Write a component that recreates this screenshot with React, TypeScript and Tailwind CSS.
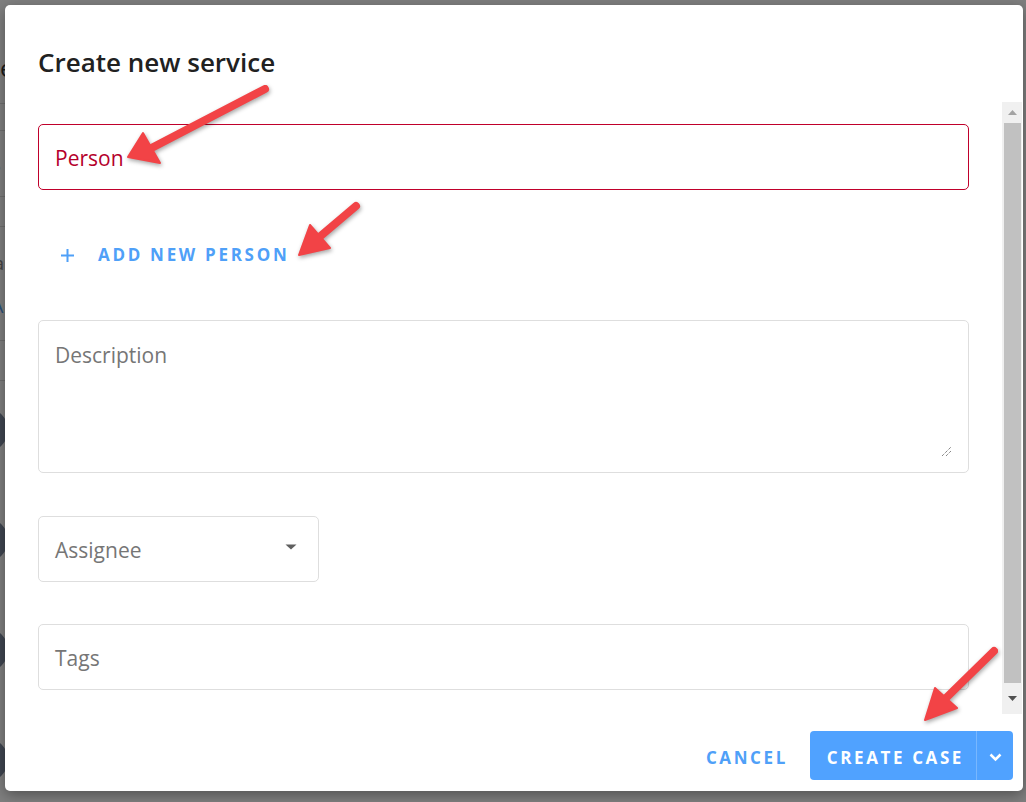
import React from "react";

function Arrow({ tail, tip, c1, c2 }: { tail: [number, number]; tip: [number, number]; c1: [number, number]; c2: [number, number] }) {
  const mx = (c1[0] + c2[0]) / 2;
  const my = (c1[1] + c2[1]) / 2;
  return (
    <g>
      <line x1={tail[0]} y1={tail[1]} x2={mx} y2={my} stroke="#f24346" strokeWidth={8} strokeLinecap="round" />
      <polygon points={`${tip[0]},${tip[1]} ${c1[0]},${c1[1]} ${c2[0]},${c2[1]}`} fill="#f24346" strokeLinejoin="round" stroke="#f24346" strokeWidth={2} />
    </g>
  );
}

export default function App() {
  const font = { fontFamily: '"Open Sans", "Noto Sans", sans-serif' };
  return (
    <div className="relative w-[1026px] h-[802px] overflow-hidden bg-[#7f7f7f]" style={font}>
      {/* dimmed background page fragments */}
      <div className="absolute left-[-40px] top-[50px] text-[24px] text-[#1a1a1a]">Cases</div>
      <div className="absolute left-0 top-[103px] w-[10px] h-px bg-[#6e6e6e]" />
      <div className="absolute left-0 top-[130px] w-[10px] h-px bg-[#6e6e6e]" />
      <div className="absolute left-0 top-[196px] w-[10px] h-px bg-[#6e6e6e]" />
      <div className="absolute left-0 top-[226px] w-[10px] h-px bg-[#6e6e6e]" />
      <div className="absolute left-0 top-[340px] w-[10px] h-px bg-[#6e6e6e]" />
      <div className="absolute left-0 top-[380px] w-[10px] h-px bg-[#6e6e6e]" />
      <div className="absolute left-[-10px] top-[150px] text-[20px] text-[#555]">S</div>
      <div className="absolute left-[-6px] top-[250px] text-[18px] text-[#444]">a</div>
      <div className="absolute left-[-8px] top-[293px] text-[18px] text-[#2a4f7a]">A</div>
      <div className="absolute left-[-36px] top-[408px] w-[44px] h-[44px] rounded-full bg-[#3f4550]" />
      <div className="absolute left-[-36px] top-[518px] w-[44px] h-[44px] rounded-full bg-[#3f4550]" />
      <div className="absolute left-[-36px] top-[628px] w-[44px] h-[44px] rounded-full bg-[#3f4550]" />
      <div className="absolute left-[-36px] top-[738px] w-[44px] h-[44px] rounded-full bg-[#3f4550]" />

      {/* modal */}
      <div className="absolute left-[5px] top-[5px] w-[1018px] h-[786px] bg-white rounded-[5px] shadow-[0_4px_14px_rgba(0,0,0,0.35)] flex flex-col">
        <div className="h-[97px] shrink-0 pl-[33px] pt-[40px]">
          <h2 className="text-[26px] leading-[34px] font-semibold text-[#212121]">Create new service</h2>
        </div>
        <div className="flex flex-1 min-h-0">
          <div className="flex-1 pl-[33px] pr-[33px] pt-[22px] flex flex-col">
            <div className="h-[66px] border border-[#c0002b] rounded-[5px] flex items-center pl-[16px] pt-[3px]">
              <span className="text-[21px] text-[#b5002b]">Person</span>
            </div>
            <div className="h-[130px] flex items-center pl-[22px] pb-[2px]">
              <div className="flex items-center gap-[23px] mt-[2px]">
                <svg width="15" height="15" viewBox="0 0 15 15">
                  <path d="M7.5 1v13M1 7.5h13" stroke="#4fa0f8" strokeWidth="2" />
                </svg>
                <span className="text-[17px] font-bold tracking-[2.7px] text-[#4fa0f8]">ADD NEW PERSON</span>
              </div>
            </div>
            <div className="relative h-[153px] border border-[#dedede] rounded-[5px] pl-[16px] pt-[19px]">
              <span className="text-[21px] leading-[30px] text-[#767676]">Description</span>
              <svg className="absolute right-[16px] bottom-[15px]" width="11" height="11" viewBox="0 0 11 11">
                <path d="M1 10L10 1M5 10L10 5" stroke="#555" strokeWidth="1" strokeDasharray="1 1" />
              </svg>
            </div>
            <div className="h-[43px]" />
            <div className="w-[281px] h-[66px] border border-[#dedede] rounded-[5px] flex items-center pl-[16px] pr-[21px] justify-between pt-[3px]">
              <span className="text-[21px] text-[#767676]">Assignee</span>
              <svg width="12" height="6" viewBox="0 0 12 6" className="mb-[7px]">
                <path d="M0.5 0.5h11L6 5.5z" fill="#5f5f5f" />
              </svg>
            </div>
            <div className="h-[42px]" />
            <div className="h-[66px] border border-[#dedede] rounded-[5px] flex items-center pl-[16px] pt-[4px]">
              <span className="text-[21px] text-[#767676]">Tags</span>
            </div>
          </div>
          {/* scrollbar */}
          <div className="w-[20px] mr-px bg-[#f0f0f0] flex flex-col shrink-0">
            <div className="h-[21px] flex items-center justify-center">
              <svg width="9" height="5" viewBox="0 0 9 5"><path d="M0 5h9L4.5 0z" fill="#a3a3a3" /></svg>
            </div>
            <div className="flex-1 ml-[2px] mr-px bg-[#c1c1c1]" />
            <div className="h-[31px] flex items-center justify-center">
              <svg width="9" height="5" viewBox="0 0 9 5"><path d="M0 0h9L4.5 5z" fill="#505050" /></svg>
            </div>
          </div>
        </div>
        <div className="h-[77px] shrink-0 flex items-start justify-end pt-[17px] pr-[10px] gap-[22px]">
          <button className="h-[49px] pt-[5px] text-[17px] font-bold tracking-[2.6px] text-[#4fa0f8]">CANCEL</button>
          <div className="h-[49px] flex rounded-[4px] bg-[#50a2ff] overflow-hidden">
            <button className="pl-[17px] pr-[12px] pt-[5px] text-[17px] font-bold tracking-[2.6px] text-white">CREATE CASE</button>
            <div className="w-px bg-[#78b7ff]" />
            <div className="w-[36px] flex items-center justify-center pt-[3px]">
              <svg width="13" height="9" viewBox="0 0 13 9"><path d="M1.5 1.5l5 5 5-5" stroke="white" strokeWidth="2.5" fill="none" /></svg>
            </div>
          </div>
        </div>
      </div>

      {/* annotation arrows */}
      <svg className="absolute inset-0 pointer-events-none" width="1026" height="802" style={{ filter: "drop-shadow(1px 2px 2px rgba(0,0,0,0.35))" }}>
        <Arrow tail={[265, 89]} tip={[128, 157]} c1={[143, 133]} c2={[160, 163]} />
        <Arrow tail={[356, 206]} tip={[299, 255]} c1={[310, 225]} c2={[330, 248]} />
        <Arrow tail={[994, 651]} tip={[925, 720]} c1={[935, 688]} c2={[957, 708]} />
      </svg>
    </div>
  );
}
